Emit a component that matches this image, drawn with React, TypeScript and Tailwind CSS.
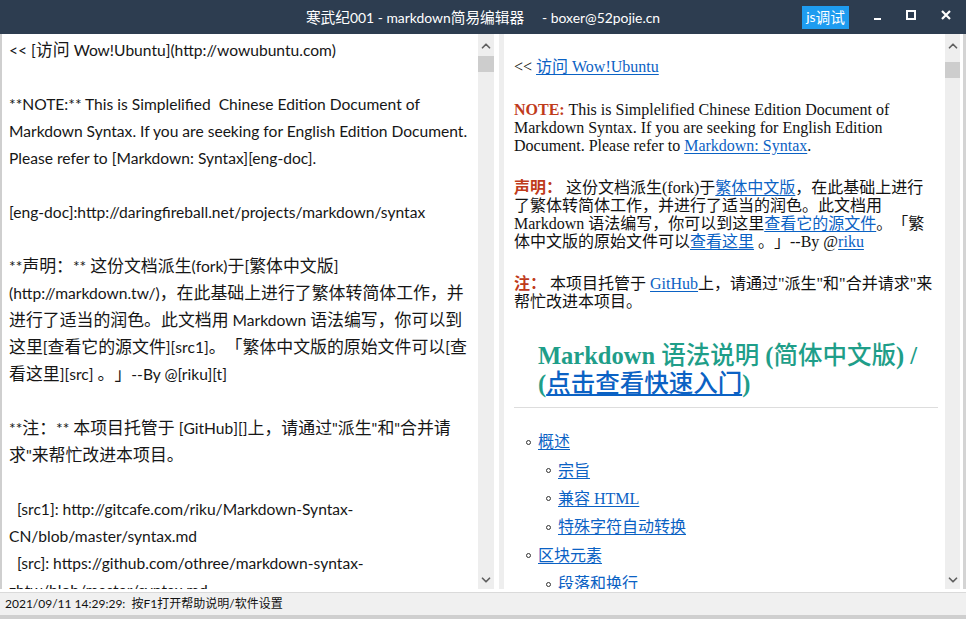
import { ChevronDown, ChevronUp } from "lucide-react";

const editorLines = [
  "<< [访问 Wow!Ubuntu](http://wowubuntu.com)",
  "",
  "**NOTE:** This is Simplelified  Chinese Edition Document of",
  "Markdown Syntax. If you are seeking for English Edition Document.",
  "Please refer to [Markdown: Syntax][eng-doc].",
  "",
  "[eng-doc]:http://daringfireball.net/projects/markdown/syntax",
  "",
  "**声明：** 这份文档派生(fork)于[繁体中文版]",
  "(http://markdown.tw/)，在此基础上进行了繁体转简体工作，并",
  "进行了适当的润色。此文档用 Markdown 语法编写，你可以到",
  "这里[查看它的源文件][src1]。「繁体中文版的原始文件可以[查",
  "看这里][src] 。」--By @[riku][t]",
  "",
  "**注：** 本项目托管于 [GitHub][]上，请通过\"派生\"和\"合并请",
  "求\"来帮忙改进本项目。",
  "",
  "  [src1]: http://gitcafe.com/riku/Markdown-Syntax-",
  "CN/blob/master/syntax.md",
  "  [src]: https://github.com/othree/markdown-syntax-",
  "zhtw/blob/master/syntax.md",
];

const toc = [
  { text: "概述", level: 0 },
  { text: "宗旨", level: 1 },
  { text: "兼容 HTML", level: 1 },
  { text: "特殊字符自动转换", level: 1 },
  { text: "区块元素", level: 0 },
  { text: "段落和换行", level: 1 },
];

// latin runs get a slightly smaller size, like Segoe UI next to YaHei
const Mixed = ({ text, latin }: { text: string; latin: string }) => (
  <>
    {text.split(/([\u3000-\u9fff\uff00-\uffef]+)/).map((part, i) =>
      i % 2 ? <span key={i}>{part}</span> : <span key={i} className={latin}>{part}</span>
    )}
  </>
);

const Scrollbar = ({ thumbTop, width }: { thumbTop: string; width: string }) => (
  <div className={`${width} shrink-0 bg-[#eeeeee] flex flex-col items-center`}>
    <ChevronUp className="mt-[5px] text-[#606060]" size={14} strokeWidth={3} />
    <div className={`${thumbTop} w-full h-[16px] bg-[#cdcdcd]`} />
    <div className="flex-1" />
    <ChevronDown className="mb-[2px] text-[#606060]" size={14} strokeWidth={3} />
  </div>
);

const A = ({ children }: { children: React.ReactNode }) => (
  <span className="text-[#0b62c4] underline underline-offset-2">{children}</span>
);

const App = () => {
  return (
    <div className="w-[966px] h-[619px] flex flex-col bg-white overflow-hidden [text-spacing-trim:space-all] font-['Lato','Noto_Sans_CJK_SC',sans-serif]">
      {/* title bar */}
      <div className="h-[34px] shrink-0 bg-[#2d3d50] grid grid-cols-[1fr_auto_1fr] items-center text-white">
        <div />
        <div className="text-[14.7px] whitespace-pre">
          <Mixed text="寒武纪001 - markdown简易编辑器     - boxer@52pojie.cn" latin="text-[13.9px]" />
        </div>
        <div className="flex justify-end items-center">
          <div className="bg-[#1e9cf0] h-[23px] px-[4px] flex items-center text-[14.7px] mr-[25px]">
            <Mixed text="js调试" latin="text-[13.9px]" />
          </div>
          <div className="w-[7px] h-[2px] bg-white mr-[25px] mt-[3px]" />
          <div className="w-[10px] h-[10px] border-2 border-white mr-[25px] mb-[4px]" />
          <svg width="10" height="10" viewBox="0 0 10 10" className="mr-[15px] mb-[4px]">
            <path d="M1 1L9 9M9 1L1 9" stroke="white" strokeWidth="2.2" />
          </svg>
        </div>
      </div>

      {/* main */}
      <div className="flex-1 flex pb-[3px] min-h-0">
        {/* editor */}
        <div className="w-[478px] shrink-0 border-l-2 border-[#cfcfcf] pl-[7px] pt-[2px] overflow-hidden text-[16.9px] leading-[27px] text-[#161616]">
          {editorLines.map((l, i) => (
            <div key={i} className="h-[27px] whitespace-pre">
              <Mixed text={l} latin="text-[15.6px]" />
            </div>
          ))}
        </div>
        <Scrollbar width="w-[16px]" thumbTop="mt-[3px]" />
        <div className="w-[5px] shrink-0 bg-white" />
        <div className="w-[5px] shrink-0 bg-[#eeeeee]" />

        {/* preview */}
        <div className="flex-1 min-w-0 overflow-hidden pl-[10px] pr-[6px] text-[16px] leading-[18px] text-[#111] font-['Liberation_Serif','Noto_Sans_CJK_SC',serif]">
          <p className="mt-[24px]">
            {"<< "}<A>访问 Wow!Ubuntu</A>
          </p>
          <p className="mt-[25px]">
            <b className="text-[#bf3b1b]">NOTE:</b> This is Simplelified Chinese Edition Document of<br />
            Markdown Syntax. If you are seeking for English Edition<br />
            Document. Please refer to <A>Markdown: Syntax</A>.
          </p>
          <p className="mt-[24px]">
            <b className="text-[#bf3b1b]">声明：</b> 这份文档派生(fork)于<A>繁体中文版</A>，在此基础上进行<br />
            了繁体转简体工作，并进行了适当的润色。此文档用<br />
            Markdown 语法编写，你可以到这里<A>查看它的源文件</A>。「繁<br />
            体中文版的原始文件可以<A>查看这里</A> 。」--By @<A>riku</A>
          </p>
          <p className="mt-[24px]">
            <b className="text-[#bf3b1b]">注：</b> 本项目托管于 <A>GitHub</A>上，请通过"派生"和"合并请求"来<br />
            帮忙改进本项目。
          </p>
          <h1 className="mt-[31px] pl-[24px] text-[24.5px] leading-[28px] font-bold text-[#1f9e89]">
            Markdown <span className="font-medium">语法说明</span> (<span className="font-medium">简体中文版</span>) /<br />
            (<A><span className="font-medium">点击查看快速入门</span></A>)
          </h1>
          <div className="mt-[9px] h-[2px] border-t border-[#dddddd] mr-[1px]" />
          <ul className="mt-[19px]">
            {toc.map((t, i) => (
              <li key={i} className={`h-[28.4px] flex items-center gap-[7px] ${t.level ? "pl-[32px]" : "pl-[12px]"}`}>
                <span className="w-[5px] h-[5px] rounded-full border border-[#333]" />
                <A>{t.text}</A>
              </li>
            ))}
          </ul>
        </div>
        <Scrollbar width="w-[15px]" thumbTop="mt-[9px]" />
        <div className="w-[3px] shrink-0 bg-white" />
        <div className="w-[3px] shrink-0 bg-[#d4d4d4]" />
      </div>

      {/* status bar */}
      <div className="h-[23px] shrink-0 bg-[#f0f0f0] border-t border-[#dadada] flex items-center pl-[5px] text-[12px] text-[#111] whitespace-pre">
        2021/09/11 14:29:29:  按F1打开帮助说明/软件设置
      </div>
      <div className="h-[4px] shrink-0 bg-[#cfcfcf]" />
    </div>
  );
};

export default App;
